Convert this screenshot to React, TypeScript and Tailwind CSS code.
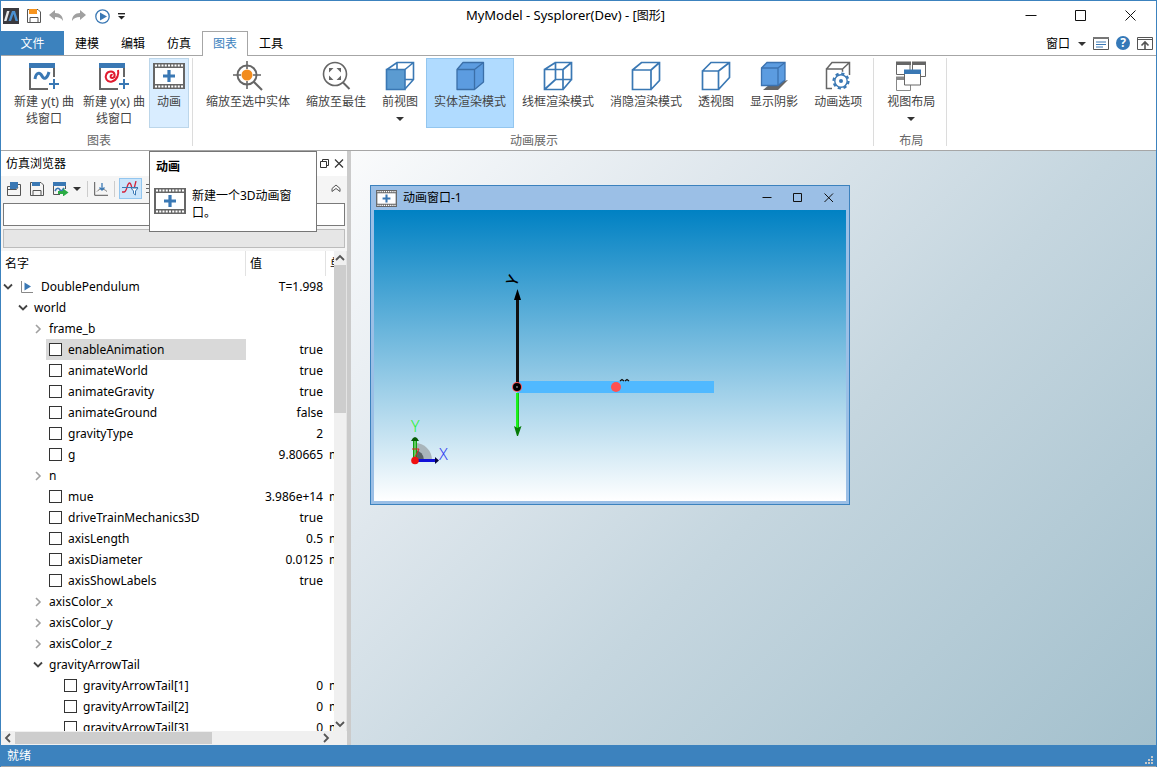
import type { ReactNode } from "react";

const BLUE = "#3a78b4";
const GRAY = "#666666";

function Svg({ w = 32, h = 32, children }: { w?: number; h?: number; children: ReactNode }) {
  return (
    <svg width={w} height={h} viewBox={`0 0 ${w} ${h}`} fill="none" aria-hidden="true" className="shrink-0">
      {children}
    </svg>
  );
}

function PlotIcon({ spiral = false }: { spiral?: boolean }) {
  return (
    <Svg>
      <path d="M2 8V29M1 29H20M26 8V17" stroke={GRAY} strokeWidth="2" />
      <path d="M1 3H27V8H1Z" fill={BLUE} />
      {spiral ? (
        <path
          d="M14.500 15C12.500 14 11.500 18.500 14.500 18 18 17.200 17 11.500 13 11.500 8.500 11.500 6.500 16 8.500 19.500 11 23.500 17 22 19.500 16.500 20.500 14 20.500 12 20 10"
          stroke="#e01b2f"
          strokeWidth="2"
        />
      ) : (
        <path d="M7 19C8 12 12 12 14 16S19 19 21 12" stroke={BLUE} strokeWidth="3" />
      )}
      <path d="M26 19V29M21 24H31" stroke={BLUE} strokeWidth="2" />
    </Svg>
  );
}

function FilmIcon({ small = false }: { small?: boolean }) {
  return (
    <svg
      width={small ? 21 : 32}
      height={small ? 17 : 32}
      viewBox={small ? "0 3 32 26" : "0 0 32 32"}
      fill="none"
      aria-hidden="true"
      className="shrink-0"
    >
      <path d="M0 3H32V29H0Z" fill={GRAY} />
      <path d="M2 8H30V24H2Z" fill="#fff" />
      <path d="M2 5.500H30M2 26.500H30" stroke="#fff" strokeWidth="2" strokeDasharray="2 1.250" />
      <path d="M16 10V22M10 16H22" stroke={BLUE} strokeWidth="3.200" />
    </svg>
  );
}

const ZoomSelected = () => (
  <Svg>
    <circle cx="15" cy="15" r="9.500" stroke={GRAY} strokeWidth="2" />
    <circle cx="15" cy="15" r="5.500" fill="#f28c1e" />
    <path d="M15 1V9M15 21V29M1 15H9M21 15H29" stroke={GRAY} strokeWidth="1.600" />
    <path d="M22 22L30 30" stroke={GRAY} strokeWidth="2.200" />
  </Svg>
);

const ZoomFit = () => (
  <Svg>
    <circle cx="15" cy="14" r="11.500" stroke={GRAY} strokeWidth="1.600" />
    <path d="M9 8H13.500L9 12.500ZM21 8H16.500L21 12.500ZM9 20H13.500L9 15.500ZM21 20H16.500L21 15.500Z" fill={GRAY} />
    <path d="M23 22.500L29.500 29" stroke={GRAY} strokeWidth="2" />
  </Svg>
);

const FrontCube = () => (
  <Svg>
    <path d="M3 9.500L13 2.500H29.500V19.500L21 29M21 9.500L29.500 2.500M13 3V20L3 29M13 19.500H29" stroke={BLUE} strokeWidth="1.600" />
    <path d="M2.500 9.500H21V29.500H2.500Z" fill="#5b9bd1" stroke={BLUE} strokeWidth="1.600" />
  </Svg>
);

const SolidCube = () => (
  <Svg>
    <path d="M3 9.500L9 2.500H29.500V22L20.500 29.500H3Z" fill="#5c9ce0" stroke="#3b6fa8" strokeWidth="1.300" strokeLinejoin="round" />
    <path d="M3 9.500H20.500V29M20.500 9.500L29.500 2.500" stroke="#3b6fa8" strokeWidth="1.300" />
  </Svg>
);

const WireCube = () => (
  <Svg>
    <path d="M2.500 9.500H21V29.500H2.500ZM13.500 2.500H29.500V19.500H13.500ZM2.500 9.500L13.500 2.500M21 9.500L29.500 2.500M2.500 29.500L13.500 19.500M21 29.500L29.500 19.500" stroke={BLUE} strokeWidth="1.700" />
  </Svg>
);

const HiddenCube = () => (
  <Svg>
    <path d="M2.500 10H21V29.500H2.500ZM2.500 10L11.500 2.500H29.500V20.500L21 29.500M21 10L29.500 2.500" stroke={BLUE} strokeWidth="1.700" />
  </Svg>
);

const PerspectiveCube = () => (
  <Svg>
    <path d="M2.500 11H18.500V29.500H2.500ZM2.500 11L11 2.500H29.500V17.500L18.500 29.500M18.500 11L29.500 2.500" stroke={BLUE} strokeWidth="1.700" />
  </Svg>
);

const ShadowCube = () => (
  <Svg>
    <path d="M5 30L12 24L30 20L20 30Z" fill={GRAY} />
    <path d="M3.500 8L9 2.500H27V20L20 25.500H3.500Z" fill="#5c9ce0" stroke="#3b72b0" strokeWidth="1.300" />
    <path d="M3.500 8H20V25M20 8L27 2.500" stroke="#3b72b0" strokeWidth="1.300" />
  </Svg>
);

const OptionsCube = () => (
  <Svg>
    <path d="M10 28.500H4.500V9H20.500V14M4.500 9L10 2.500H27.500V15M20.500 9L27.500 2.500" stroke={GRAY} strokeWidth="1.500" />
    <circle cx="19" cy="21" r="9.500" fill="#fff" />
    <circle cx="19" cy="21" r="7.500" stroke={BLUE} strokeWidth="2.200" strokeDasharray="3.200 2.690" />
    <circle cx="19" cy="21" r="6.200" stroke={BLUE} strokeWidth="1.400" fill="#fff" />
    <circle cx="19" cy="21" r="2" fill={BLUE} />
  </Svg>
);

const LayoutIcon = () => (
  <Svg>
    <path d="M1.500 3H15V14.500H1.500ZM17.500 3H30.500V16.500H17.500Z" stroke={GRAY} />
    <path d="M1 1.500H16V5H1ZM17 1.500H31V5H17Z" fill={GRAY} />
    <path d="M1.500 18H15.500V30.500H1.500Z" stroke="#888" />
    <path d="M1 16.500H16V20H1Z" fill="#888" />
    <path d="M9.500 10.500H25.500V25H9.500Z" fill="#fff" stroke={GRAY} />
    <path d="M9 9.500H26V14H9Z" fill={BLUE} />
  </Svg>
);

const Caret = () => (
  <Svg w={8} h={4}>
    <path d="M0 0H8L4 4Z" fill="#333" />
  </Svg>
);

function RibbonButton({ icon, lines, state = "", caret = false, size = "px-[7px]" }: {
  icon: ReactNode;
  lines: string[];
  state?: string;
  caret?: boolean;
  size?: string;
}) {
  return (
    <button className={`flex h-[70px] shrink-0 flex-col items-center border pt-px leading-[17px] whitespace-nowrap text-[#444] ${size} ${state || "border-transparent"}`}>
      {icon}
      <span className="mt-px flex flex-col">
        {lines.map((line) => (
          <span key={line}>{line}</span>
        ))}
      </span>
      {caret && (
        <span className="mt-[7px]">
          <Caret />
        </span>
      )}
    </button>
  );
}

function RibbonGroup({ label, pad, children }: { label: string; pad: string; children: ReactNode }) {
  return (
    <section className={`flex flex-col ${pad}`} aria-label={label}>
      <div className="flex">{children}</div>
      <div className="mt-1 text-center leading-[17px] text-[#666]">{label}</div>
    </section>
  );
}

const GroupLine = () => <div className="mb-1 w-px shrink-0 bg-[#dcdcdc]" />;

function Ribbon() {
  return (
    <div className="flex h-[95px] shrink-0 overflow-hidden border-b border-[#a6a6a6] bg-white pt-[2px]">
      <RibbonGroup label="图表" pad="pl-2 pr-[3px]">
        <RibbonButton icon={<PlotIcon />} lines={["新建 y(t) 曲", "线窗口"]} size="w-[70px]" />
        <RibbonButton icon={<PlotIcon spiral />} lines={["新建 y(x) 曲", "线窗口"]} size="w-[70px]" />
        <RibbonButton icon={<FilmIcon />} lines={["动画"]} state="border-[#bcd6ea] bg-[#d9edff]" size="w-10" />
      </RibbonGroup>
      <GroupLine />
      <RibbonGroup label="动画展示" pad="pl-[5px] pr-[3px]">
        <RibbonButton icon={<ZoomSelected />} lines={["缩放至选中实体"]} />
        <RibbonButton icon={<ZoomFit />} lines={["缩放至最佳"]} />
        <RibbonButton icon={<FrontCube />} lines={["前视图"]} caret />
        <RibbonButton icon={<SolidCube />} lines={["实体渲染模式"]} state="border-[#93c6ef] bg-[#b0dbff]" />
        <RibbonButton icon={<WireCube />} lines={["线框渲染模式"]} />
        <RibbonButton icon={<HiddenCube />} lines={["消隐渲染模式"]} />
        <RibbonButton icon={<PerspectiveCube />} lines={["透视图"]} />
        <RibbonButton icon={<ShadowCube />} lines={["显示阴影"]} />
        <RibbonButton icon={<OptionsCube />} lines={["动画选项"]} />
      </RibbonGroup>
      <GroupLine />
      <RibbonGroup label="布局" pad="pl-[5px] pr-[3px]">
        <RibbonButton icon={<LayoutIcon />} lines={["视图布局"]} caret />
      </RibbonGroup>
      <GroupLine />
    </div>
  );
}

function TitleBar() {
  return (
    <header className="flex h-[30px] shrink-0 items-center pl-[2px]">
      <div className="flex items-center gap-2">
        <Svg w={16} h={16}>
          <path d="M0 0H16V16H0Z" fill="#3a3a3f" />
          <path d="M1 13L4 3H6.500L3.500 13Z" fill="#e8e8e8" />
          <path d="M5.500 13L9 3H12L15 13H12.500L10.500 6L8 13Z" fill="#4a90d0" />
        </Svg>
        <button aria-label="保存">
          <Svg w={14} h={14}>
            <path d="M.5 .5H11L13.500 3V13.500H.5ZM3 13V8.500H11V13" stroke="#555" />
            <path d="M2 0H10V5H2Z" fill="#f7941d" />
          </Svg>
        </button>
        <button aria-label="撤销">
          <Svg w={15} h={14}>
            <path d="M0 6L6 1V4C11 4 14 7 14 12C12 9 10 8 6 8V11Z" fill="#a0a0a0" />
          </Svg>
        </button>
        <button aria-label="重做">
          <Svg w={15} h={14}>
            <path d="M14 6L8 1V4C3 4 0 7 0 12C2 9 4 8 8 8V11Z" fill="#a0a0a0" />
          </Svg>
        </button>
        <button aria-label="仿真">
          <Svg w={15} h={15}>
            <circle cx="7.500" cy="7.500" r="6.700" stroke={BLUE} strokeWidth="1.300" />
            <path d="M5 3.500L12 7.500L5 11.500Z" fill={BLUE} />
          </Svg>
        </button>
        <button aria-label="自定义">
          <Svg w={7} h={7}>
            <path d="M0 .7H7" stroke="#222" strokeWidth="1.400" />
            <path d="M0 3H7L3.500 6.500Z" fill="#222" />
          </Svg>
        </button>
      </div>
      <h1 className="flex-1 text-center text-[13px]">
        MyModel - Sysplorer(Dev) - [<span className="text-xs">图形</span>]
      </h1>
      <button className="flex h-full w-[50px] items-center justify-center" aria-label="最小化">
        <Svg w={12} h={12}><path d="M.5 5.500H11.500" stroke="#111" /></Svg>
      </button>
      <button className="flex h-full w-[50px] items-center justify-center" aria-label="最大化">
        <Svg w={12} h={12}><path d="M.5 .5H10.500V10.500H.5Z" stroke="#111" /></Svg>
      </button>
      <button className="flex h-full w-[50px] items-center justify-center" aria-label="关闭">
        <Svg w={12} h={12}><path d="M.5 .5L10.500 10.500M10.500 .5L.5 10.500" stroke="#111" /></Svg>
      </button>
    </header>
  );
}

function TabBar() {
  return (
    <nav className="flex h-[25px] shrink-0 items-center border-b border-[#a6a6a6] bg-white">
      <button className="h-full w-[63px] bg-[#3c82be] pt-px text-white">文件</button>
      {["建模", "编辑", "仿真"].map((t) => (
        <button key={t} className="h-full w-[46px] pt-px">{t}</button>
      ))}
      <button className="-mb-px h-[25px] w-[46px] border border-b-0 border-[#a6a6a6] bg-white text-[#3c82be]">图表</button>
      <button className="h-full w-[46px] pt-px">工具</button>
      <div className="ml-auto flex items-center gap-[7px] pr-[3px]">
        <button className="flex items-center gap-2 pt-px">窗口 <Caret /></button>
        <button aria-label="选项">
          <Svg w={16} h={13}>
            <path d="M.5 .5H15.500V12.500H.5Z" stroke="#555" />
            <path d="M0 0H16V2H0Z" fill="#777" />
            <path d="M3 5H13M3 7.500H13M3 10H10" stroke={BLUE} />
          </Svg>
        </button>
        <button aria-label="帮助" className="flex size-[14px] items-center justify-center rounded-full bg-[#3579b8] text-xs leading-[14px] font-bold text-white">?</button>
        <button aria-label="折叠功能区">
          <Svg w={16} h={13}>
            <path d="M.5 .5H15.500V12.500H.5ZM1 2.500H15" stroke="#555" />
            <path d="M8 12V5M4.500 8.500L8 5L11.500 8.500" stroke="#555" strokeWidth="1.600" />
          </Svg>
        </button>
      </div>
    </nav>
  );
}

type Row = { name: string; level: number; value?: string; unit?: string; open?: boolean; leaf?: boolean; selected?: boolean };

const rows: Row[] = [
  { name: "DoublePendulum", level: 0, value: "T=1.998", open: true },
  { name: "world", level: 1, open: true },
  { name: "frame_b", level: 2 },
  { name: "enableAnimation", level: 3, value: "true", leaf: true, selected: true },
  { name: "animateWorld", level: 3, value: "true", leaf: true },
  { name: "animateGravity", level: 3, value: "true", leaf: true },
  { name: "animateGround", level: 3, value: "false", leaf: true },
  { name: "gravityType", level: 3, value: "2", leaf: true },
  { name: "g", level: 3, value: "9.80665", unit: "m/s2", leaf: true },
  { name: "n", level: 2 },
  { name: "mue", level: 3, value: "3.986e+14", unit: "m3/s2", leaf: true },
  { name: "driveTrainMechanics3D", level: 3, value: "true", leaf: true },
  { name: "axisLength", level: 3, value: "0.5", unit: "m", leaf: true },
  { name: "axisDiameter", level: 3, value: "0.0125", unit: "m", leaf: true },
  { name: "axisShowLabels", level: 3, value: "true", leaf: true },
  { name: "axisColor_x", level: 2 },
  { name: "axisColor_y", level: 2 },
  { name: "axisColor_z", level: 2 },
  { name: "gravityArrowTail", level: 2, open: true },
  { name: "gravityArrowTail[1]", level: 4, value: "0", unit: "m", leaf: true },
  { name: "gravityArrowTail[2]", level: 4, value: "0", unit: "m", leaf: true },
  { name: "gravityArrowTail[3]", level: 4, value: "0", unit: "m", leaf: true },
];

const indents = ["pl-0", "pl-[15px]", "pl-[30px]", "pl-[45px]", "pl-[60px]"];

function NameCell({ row }: { row: Row }) {
  return (
    <div className={`flex h-[21px] ${indents[row.level]}`}>
      {row.leaf ? (
        <label className={`flex flex-1 items-center gap-[6px] pl-[3px] ${row.selected ? "bg-[#d9d9d9]" : ""}`}>
          <input type="checkbox" className="size-[13px] shrink-0 appearance-none border border-[#333] bg-white" />
          {row.name}
        </label>
      ) : (
        <div className="flex items-center gap-1">
          <button aria-label={row.name} className="flex w-[14px] justify-center">
            <Svg w={10} h={10}>
              {row.open ? (
                <path d="M1 2.500L5 6.500L9 2.500" stroke="#444" strokeWidth="1.800" />
              ) : (
                <path d="M3 1L7 5L3 9" stroke="#a0a0a0" strokeWidth="1.600" />
              )}
            </Svg>
          </button>
          {row.level === 0 && (
            <span className="mr-1">
              <Svg w={14} h={14}>
                <path d="M2.500 1V12.500H14" stroke="#888" />
                <path d="M5.500 2.500L12 6.500L5.500 10.500Z" fill={BLUE} />
              </Svg>
            </span>
          )}
          {row.name}
        </div>
      )}
    </div>
  );
}

function VariableTable() {
  return (
    <div className="h-full min-w-0 flex-1 overflow-hidden">
      <table className="w-[400px] table-fixed border-separate border-spacing-0">
        <colgroup>
          <col className="w-[245px]" />
          <col className="w-20" />
          <col />
        </colgroup>
        <thead>
          <tr className="h-[25px] text-left">
            <th className="border-r border-[#e2e2e2] p-0 pl-1 font-normal">名字</th>
            <th className="border-r border-[#e2e2e2] p-0 pl-1 font-normal">值</th>
            <th className="p-0 pl-1 font-normal">单位</th>
          </tr>
        </thead>
        <tbody>
          {rows.map((row) => (
            <tr key={row.name} className="h-[21px] text-xs leading-[21px]">
              <td className="p-0"><NameCell row={row} /></td>
              <td className="p-0 pr-[3px] text-right">{row.value}</td>
              <td className="p-0 pl-[3px]">{row.unit}</td>
            </tr>
          ))}
        </tbody>
      </table>
    </div>
  );
}

function Arrow({ d }: { d: string }) {
  return (
    <Svg w={10} h={10}>
      <path d={d} stroke="#555" strokeWidth="1.800" />
    </Svg>
  );
}

function Tooltip() {
  return (
    <div role="tooltip" className="absolute top-0 left-[148px] z-10 h-[81px] w-[168px] border border-[#767676] bg-white px-1 pt-[6px]">
      <div className="pl-[2px] leading-[17px] font-bold">动画</div>
      <div className="mt-[10px] flex gap-[6px]">
        <FilmIcon />
        <p className="w-[108px] pt-[2px] leading-[17px]">新建一个3D动画窗口。</p>
      </div>
    </div>
  );
}

function SimulationBrowser() {
  return (
    <aside className="relative flex w-[346px] shrink-0 flex-col bg-[#f5f5f5]">
      <div className="flex h-[25px] shrink-0 items-center bg-white pr-[3px] pl-[5px]">
        <h2 className="flex-1">仿真浏览器</h2>
        <button aria-label="浮动" className="mr-[5px]">
          <Svg w={9} h={9}><path d="M.5 2.500H6.500V8.500H.5ZM2.500 2.500V.5H8.500V6.500H6.500" stroke="#333" /></Svg>
        </button>
        <button aria-label="关闭面板">
          <Svg w={10} h={9}><path d="M1 .5L9 8.500M9 .5L1 8.500" stroke="#333" strokeWidth="1.200" /></Svg>
        </button>
      </div>
      <div className="mb-[2px] flex h-[25px] shrink-0 items-center gap-2 pr-[6px] pl-[6px]">
        <button aria-label="打开">
          <Svg w={15} h={14}>
            <path d="M3 4.500H.5V13.500H13.500V2.500H11M.5 7.500H9.500L11 5" stroke="#555" />
            <path d="M3 0H11V5L9 7H3Z" fill={BLUE} />
          </Svg>
        </button>
        <button aria-label="保存结果">
          <Svg w={15} h={14}>
            <path d="M.5 .5H11L13.500 3V13.500H.5ZM3 13V8.500H11V13" stroke="#555" />
            <path d="M2 0H10V4H2Z" fill={BLUE} />
          </Svg>
        </button>
        <button aria-label="导出" className="flex items-center gap-1">
          <Svg w={16} h={14}>
            <path d="M.5 1V12.500H7M12.500 3V7" stroke="#555" />
            <path d="M0 0H13V4H0Z" fill={BLUE} />
            <path d="M2 9C4 5 6 6 7 8S10 8 11 6" stroke={BLUE} strokeWidth="1.700" />
            <path d="M5 9H10V6.500L15.500 10.500L10 14.500V12H5Z" fill="#2bab45" />
          </Svg>
          <Caret />
        </button>
        <span className="-mx-[2px] h-4 w-px bg-[#ccc]" />
        <button aria-label="坐标轴">
          <Svg w={14} h={14}>
            <path d="M.7 0V13.300H14" stroke="#555" />
            <path d="M3 9.500C6 6 9 6 13 9.500" stroke="#777" />
            <path d="M8 1V8M5.500 5.500L8 8L10.500 5.500" stroke={BLUE} strokeWidth="1.300" />
          </Svg>
        </button>
        <span className="-mx-[2px] h-4 w-px bg-[#ccc]" />
        <button aria-label="筛选" className="-ml-[2px] flex h-[21px] w-[23px] items-center justify-center border border-[#93c6ef] bg-[#cbe5fb]">
          <Svg w={17} h={15}>
            <path d="M0 11H2C5 11 5 2 7.500 2S9 10 12 8L14 0" stroke="#d3233b" strokeWidth="1.300" />
            <path d="M0 6.500H16M9 7H16L13.500 10V14L11.500 12.500V10Z" stroke={BLUE} fill="#fff" />
          </Svg>
        </button>
        <button aria-label="列表" className="-ml-1">
          <Svg w={14} h={14}><path d="M0 2.500H12M0 6.500H12M0 10.500H12" stroke="#666" /></Svg>
        </button>
        <button aria-label="折叠" className="ml-auto">
          <Svg w={10} h={9}><path d="M1 4.500L5 1L9 4.500V7.500L5 4.500L1 7.500Z" stroke="#555" /></Svg>
        </button>
      </div>
      <div className="flex shrink-0 flex-col gap-[3px] px-[2px] pb-[3px]">
        <input aria-label="搜索变量" className="h-[23px] w-full border border-[#7a7a7a] bg-white px-1" />
        <div className="h-[19px] border border-[#bcbcbc] bg-[#e6e6e6]" />
      </div>
      <div className="flex min-h-0 flex-1 basis-0 bg-white">
        <VariableTable />
        <div className="flex w-[13px] shrink-0 flex-col items-center border-r border-[#e4e4e4] bg-[#f0f0f0]">
          <div className="flex h-[14px] items-center"><Arrow d="M1 7L5 3L9 7" /></div>
          <div className="h-[148px] w-full bg-[#cdcdcd]" />
          <div className="mt-auto flex h-[14px] items-center"><Arrow d="M1 3L5 7L9 3" /></div>
        </div>
      </div>
      <div className="flex h-[14px] shrink-0 items-center bg-[#f0f0f0] pr-[14px]">
        <div className="flex w-[14px] justify-center"><Arrow d="M7 1L3 5L7 9" /></div>
        <div className="h-3 w-[197px] bg-[#cdcdcd]" />
        <div className="ml-auto flex w-[14px] justify-center"><Arrow d="M3 1L7 5L3 9" /></div>
      </div>
      <Tooltip />
    </aside>
  );
}

function Scene() {
  return (
    <svg viewBox="0 0 472 291" fill="none" className="block w-full flex-1 bg-[linear-gradient(to_bottom,#0081c3,#ffffff)]" role="img" aria-label="双摆动画">
      <path d="M143 171H340V183H143Z" fill="#50b9ff" />
      <circle cx="242" cy="177" r="5" fill="#ff5050" />
      <path d="M246 171L248 169.500L250 171M251 171L253 169.500L255 171" stroke="#111" strokeWidth="1.400" />
      <path d="M143.500 183V218" stroke="#12c012" strokeWidth="3" />
      <path d="M143 183V218" stroke="#20ff20" strokeWidth="1.600" />
      <path d="M140 216L143.500 218L147.500 216L144 226H143Z" fill="#067a06" />
      <path d="M143.500 88V174" stroke="#111" strokeWidth="3" />
      <path d="M143.500 79L147 90H140Z" fill="#000" />
      <circle cx="143" cy="177" r="5" fill="#ff5050" />
      <circle cx="143" cy="177" r="4" fill="#000" />
      <circle cx="143" cy="177" r="1" fill="#777" />
      <text x="0" y="0" transform="translate(142 77) rotate(-66)" fontSize="16" fontWeight="500" fill="#000">Y</text>
      <path d="M41 250V233A17 17 0 0 1 58 250Z" fill="#a9b5bb" />
      <path d="M41 250V240A10 10 0 0 1 50 250Z" fill="#5a6266" />
      <path d="M41 250V230" stroke="#10a010" strokeWidth="4" />
      <path d="M41 247V231" stroke="#b0f0b0" />
      <path d="M37 231L39 228L41 227L43 228L45 231Z" fill="#065a06" />
      <path d="M44 250.500H62" stroke="#1010d8" strokeWidth="3" />
      <path d="M61 247L65 250.500L61 254Z" fill="#060640" />
      <path d="M38 239H45L41 247" stroke="#e02020" />
      <circle cx="41" cy="250.500" r="3.800" fill="#f01010" />
      <text x="37" y="222" fontSize="16" fontWeight="300" fill="#2af23a">Y</text>
      <text x="65" y="250" fontSize="16" fontWeight="300" fill="#3040f0">X</text>
    </svg>
  );
}

function AnimationWindow() {
  return (
    <section className="absolute top-[34px] left-[19px] flex h-[320px] w-[480px] flex-col border border-[#3c82be] bg-[#9bbfe6] px-[3px] pb-[3px]">
      <div className="flex h-6 shrink-0 items-center gap-[6px] pl-[2px]">
        <FilmIcon small />
        <h2 className="flex-1">动画窗口-1</h2>
        <button aria-label="最小化窗口" className="flex w-[25px] justify-center"><Svg w={10} h={10}><path d="M.5 4.500H9.500" stroke="#111" /></Svg></button>
        <button aria-label="最大化窗口" className="flex w-[25px] justify-center"><Svg w={10} h={10}><path d="M.5 .5H8.500V8.500H.5Z" stroke="#111" /></Svg></button>
        <button aria-label="关闭窗口" className="mr-[5px] flex w-[25px] justify-center"><Svg w={10} h={10}><path d="M.5 .5L9 9M9 .5L.5 9" stroke="#111" /></Svg></button>
      </div>
      <Scene />
    </section>
  );
}

export default function App() {
  return (
    <div className="flex h-screen flex-col border border-b-0 border-[#3c82be] bg-white font-['Noto_Sans','Noto_Sans_CJK_SC',sans-serif] text-xs text-black">
      <TitleBar />
      <TabBar />
      <Ribbon />
      <div className="flex min-h-0 flex-1">
        <SimulationBrowser />
        <div className="w-1 shrink-0 bg-[#cbcbcb]" />
        <main className="relative min-w-0 flex-1 overflow-hidden bg-[linear-gradient(135deg,#fafbfc_0%,#dfe7ed_28%,#c5d6df_55%,#a3c0cd_100%)]">
          <AnimationWindow />
        </main>
      </div>
      <footer className="flex h-[22px] shrink-0 items-center justify-between border-b border-[#a6a6a6] bg-[#3c82be] pr-[3px] pl-[6px] text-white">
        <span>就绪</span>
        <span className="self-end pb-[2px]">
          <Svg w={8} h={8}>
            <path d="M6 0H8V2H6ZM3 3H5V5H3ZM6 3H8V5H6ZM0 6H2V8H0ZM3 6H5V8H3ZM6 6H8V8H6Z" fill="#c9c9c9" />
          </Svg>
        </span>
      </footer>
    </div>
  );
}
